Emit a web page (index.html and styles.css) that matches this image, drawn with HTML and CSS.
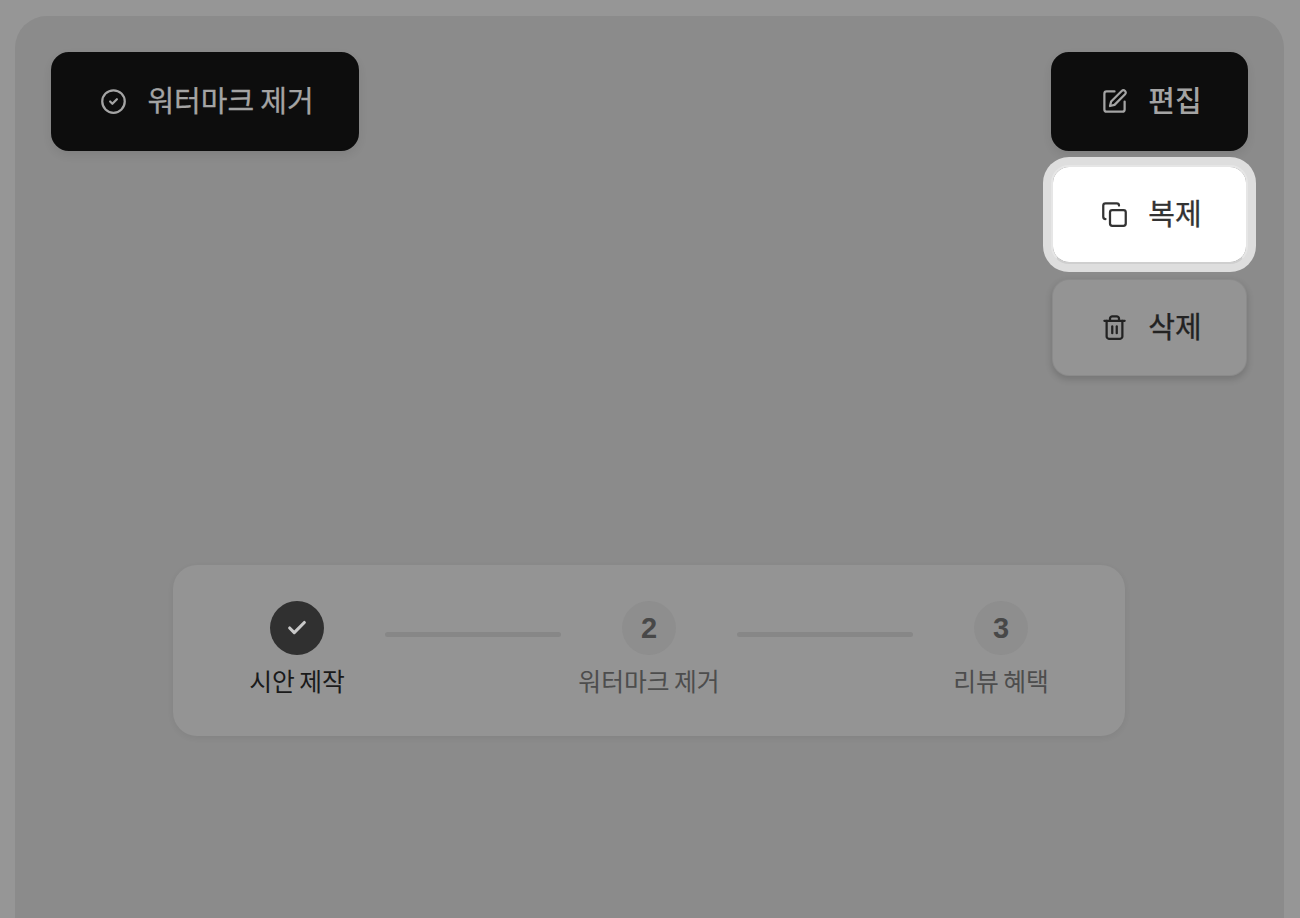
FILE: index.html
```html
<!doctype html>
<html lang="ko">

<head>
  <title>시안 제작</title>
  <link rel="stylesheet" href="styles.css">
</head>

<body>
  <div class="panel">
    <div class="top-bar">
      <button class="btn btn-dark btn-wide">
        <svg class="icon" viewBox="0 0 24 24"><circle cx="12" cy="12" r="10"/><path d="m9 12 2 2 4-4"/></svg>
        <span class="btn-text">워터마크 제거</span>
      </button>
      <div class="actions">
        <button class="btn btn-dark btn-strong">
          <svg class="icon" viewBox="0 0 24 24"><path d="M12 3H5a2 2 0 0 0-2 2v14a2 2 0 0 0 2 2h14a2 2 0 0 0 2-2v-7"/><path d="M18.4 2.6a2.1 2.1 0 1 1 3 3L12 15l-4 1 1-4Z"/></svg>
          <span class="btn-text">편집</span>
        </button>
        <button class="btn btn-selected">
          <svg class="icon" viewBox="0 0 24 24"><rect x="8" y="8" width="14" height="14" rx="2"/><path d="M4 16c-1.1 0-2-.9-2-2V4c0-1.1.9-2 2-2h10c1.1 0 2 .9 2 2"/></svg>
          <span class="btn-text">복제</span>
        </button>
        <button class="btn btn-muted">
          <svg class="icon" viewBox="0 0 24 24"><path d="M3 6h18"/><path d="M19 6v14c0 1-1 2-2 2H7c-1 0-2-1-2-2V6"/><path d="M8 6V4c0-1 1-2 2-2h4c1 0 2 1 2 2v2"/><path d="M10 11v6"/><path d="M14 11v6"/></svg>
          <span class="btn-text">삭제</span>
        </button>
      </div>
    </div>

    <div class="stepper">
      <div class="step step-done">
        <div class="step-circle">
          <svg class="check" viewBox="0 0 24 24"><path d="M20 6 9 17l-5-5"/></svg>
        </div>
        <div class="step-label">시안 제작</div>
      </div>
      <div class="step-line"></div>
      <div class="step">
        <div class="step-circle">2</div>
        <div class="step-label">워터마크 제거</div>
      </div>
      <div class="step-line"></div>
      <div class="step">
        <div class="step-circle">3</div>
        <div class="step-label">리뷰 혜택</div>
      </div>
    </div>
  </div>
</body>

</html>
```

FILE: styles.css
```css
html, body {
  height: 100%;
}
body {
  margin: 0;
  overflow: hidden;
  background: #969696;
  font-family: "Noto Sans CJK KR", "Noto Sans", sans-serif;
}
.panel {
  box-sizing: border-box;
  width: 1269px;
  height: 902px;
  margin: 16px 0 0 15px;
  padding: 36px 36px 0;
  border-radius: 32px 32px 0 0;
  background: #8b8b8b;
}
.top-bar {
  display: flex;
  justify-content: space-between;
  align-items: flex-start;
}
.actions {
  display: flex;
  flex-direction: column;
  gap: 14px;
  width: 197px;
}
.btn {
  box-sizing: border-box;
  display: flex;
  align-items: center;
  justify-content: center;
  gap: 20px;
  height: 99px;
  padding: 0 0 0 4px;
  border: 2px solid transparent;
  border-radius: 18px;
  background-clip: padding-box;
  font-family: inherit;
  font-size: 29px;
  font-weight: 400;
  word-spacing: -2px;
  box-shadow: 0 4px 10px rgba(0, 0, 0, 0.08);
}
.btn-wide {
  width: 308px;
}
.btn-text {
  margin-top: -5px;
  -webkit-text-stroke: 0.3px currentColor;
}
.btn-dark {
  border-color: #0d0d0d;
  background-color: #0d0d0d;
  background-clip: border-box;
  color: #a4a4a4;
}
.btn-strong {
  font-weight: 500;
}
.btn-strong .btn-text {
  -webkit-text-stroke: 0;
}
.btn-selected {
  border-color: #e6e6e6 #e6e6e6 #cfcfcf;
  background-color: #fff;
  color: #333;
  box-shadow: 0 0 0 8px #dedede;
}
.btn-muted {
  background-color: #949494;
  color: #222;
  box-shadow: 0 3px 6px rgba(0, 0, 0, 0.14);
}
.icon {
  width: 27px;
  height: 27px;
  margin-top: -1px;
  fill: none;
  stroke: currentColor;
  stroke-width: 2;
  stroke-linecap: round;
  stroke-linejoin: round;
}
.stepper {
  display: flex;
  align-items: flex-start;
  gap: 18px;
  width: 952px;
  box-sizing: border-box;
  margin: 188px 0 0 122px;
  padding: 36px 54px 41px;
  border-radius: 24px;
  background: #949494;
  box-shadow: 0 2px 6px rgba(0, 0, 0, 0.06);
}
.step {
  display: flex;
  flex-direction: column;
  align-items: center;
  gap: 10px;
  width: 140px;
}
.step-circle {
  display: flex;
  align-items: center;
  justify-content: center;
  width: 54px;
  height: 54px;
  border-radius: 50%;
  background: #8e8e8e;
  color: #484848;
  font-family: "Liberation Sans", sans-serif;
  font-size: 29px;
  font-weight: 700;
}
.step-label {
  font-size: 24.8px;
  line-height: 30px;
  word-spacing: -2.5px;
  color: #4d4d4d;
  white-space: nowrap;
}
.step-done .step-circle {
  background: #303030;
}
.step-done .step-label {
  color: #1a1a1a;
}
.check {
  width: 22px;
  height: 22px;
  fill: none;
  stroke: #c8c8c8;
  stroke-width: 3.4;
  stroke-linecap: round;
  stroke-linejoin: round;
}
.step-line {
  flex: 1;
  height: 5px;
  margin-top: 31px;
  border-radius: 3px;
  background: #878787;
}
```
